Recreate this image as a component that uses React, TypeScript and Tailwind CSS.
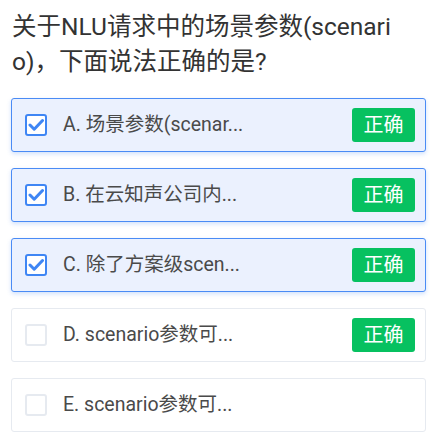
const options = [
  { key: "A", text: "场景参数(scenar...", checked: true, correct: true },
  { key: "B", text: "在云知声公司内...", checked: true, correct: true },
  { key: "C", text: "除了方案级scen...", checked: true, correct: true },
  { key: "D", text: "scenario参数可...", checked: false, correct: true },
  { key: "E", text: "scenario参数可...", checked: false, correct: false },
]

function CheckBox({ checked }: { checked: boolean }) {
  if (!checked) {
    return <div className="w-[22px] h-[22px] rounded-[3px] border-2 border-[#e6eaf0] bg-white shrink-0" />
  }
  return (
    <div className="w-[22px] h-[22px] rounded-[3px] border-2 border-[#3f86f4] bg-white shrink-0 flex items-center justify-center">
      <svg width="16" height="14" viewBox="0 0 16 14" fill="none">
        <path d="M2 7l4.2 4.2L14.5 2.5" stroke="#3f86f4" strokeWidth="3" strokeLinecap="round" strokeLinejoin="round" />
      </svg>
    </div>
  )
}

export default function App() {
  return (
    <div className="w-[430px] h-[438px] bg-white pl-[11px] pr-[4px] pt-[9px] font-['Roboto','Noto_Sans_CJK_SC',sans-serif]">
      {/* question */}
      <h1 className="text-[24.5px] leading-[35px] text-[#333] break-all pr-[30px] pl-px">
        关于NLU请求中的场景参数(scenario)，下面说法正确的是?
      </h1>

      {/* options */}
      <div className="flex flex-col gap-4 mt-[19px]">
        {options.map((o) => (
          <div
            key={o.key}
            className={`h-[54px] rounded-[3px] border flex items-center pl-[13px] pr-[10px] ${
              o.checked
                ? "border-[#4a8bf5] bg-[#ebf1fe] shadow-[0_2px_4px_rgba(74,139,245,0.25)]"
                : "border-[#e6eaf0] bg-white"
            }`}
          >
            <CheckBox checked={o.checked} />
            <span className="ml-[16px] text-[19.5px] text-[#4a4a4a] flex-1 whitespace-nowrap">
              {o.key}. {o.text}
            </span>
            {o.correct && (
              <span className="w-[63px] h-[34px] rounded-[3px] bg-[#07c160] text-white text-[20px] flex items-center justify-center">
                正确
              </span>
            )}
          </div>
        ))}
      </div>
    </div>
  )
}
